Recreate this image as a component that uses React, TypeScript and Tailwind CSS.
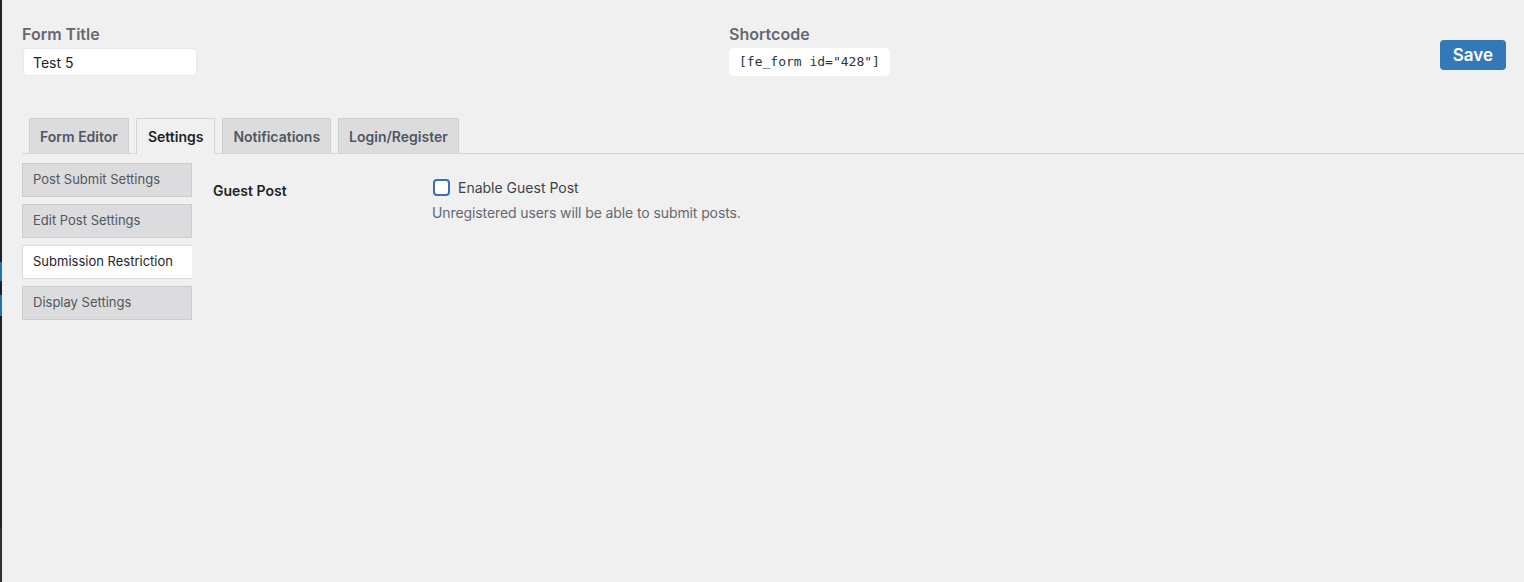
import React, { useState } from 'react';

const tabs = ['Form Editor', 'Settings', 'Notifications', 'Login/Register'];
const sections = ['Post Submit Settings', 'Edit Post Settings', 'Submission Restriction', 'Display Settings'];

export default function App() {
  const [tab, setTab] = useState('Settings');
  const [section, setSection] = useState('Submission Restriction');
  const [guest, setGuest] = useState(false);

  return (
    <div className="min-h-[582px] w-full bg-[#f0f0f1] flex font-['Inter','Liberation_Sans',sans-serif]">
      {/* admin menu edge */}
      <div className="w-[2px] shrink-0 flex flex-col bg-[#1d2327]">
        <div className="h-[262px]" />
        <div className="h-[19px] bg-[#2271b1]" />
        <div className="h-[14px]" />
        <div className="h-[21px] bg-[#2271b1]" />
        <div className="h-[212px]" />
        <div className="flex-1 bg-[#2c3338]" />
      </div>

      <div className="flex-1 pl-5 pt-[26px]">
        {/* header */}
        <div className="flex items-start pr-[18px]">
          <div className="w-[707px]">
            <div className="text-[16px] leading-[16px] font-semibold text-[#646970]">Form Title</div>
            <input
              defaultValue="Test 5"
              className="mt-[6px] ml-px w-[174px] h-[28px] rounded-[4px] bg-white border border-[#e4e8ee] px-[9px] text-[14px] text-[#1d2327] outline-none"
            />
          </div>
          <div className="flex-1">
            <div className="text-[16px] leading-[16px] font-semibold text-[#646970]">Shortcode</div>
            <div className="mt-[6px] inline-flex items-center h-[28px] px-[10px] rounded-[5px] bg-white font-['DejaVu_Sans_Mono','Liberation_Mono',monospace] text-[13px] text-[#2c3338]">
              [fe_form id="428"]
            </div>
          </div>
          <button className="mt-[14px] h-[30px] px-[13px] rounded-[4px] bg-[#3379b7] text-white text-[17px] font-semibold leading-none">
            Save
          </button>
        </div>

        {/* tabs */}
        <div className="mt-[42px] flex items-end gap-[7px] pl-[7px] border-b border-[#d6d6d8] h-[36px]">
          {tabs.map((t) => (
            <button
              key={t}
              onClick={() => setTab(t)}
              className={
                t === tab
                  ? 'h-[36px] -mb-px px-[11px] border border-b-0 border-[#d6d6d8] bg-[#f0f0f1] text-[14px] font-semibold text-[#1d2327]'
                  : 'h-[35px] px-[10px] border border-b-0 border-[#d0d0d2] bg-[#dcdcde] text-[14px] font-semibold text-[#50575e]'
              }
            >
              {t}
            </button>
          ))}
        </div>

        {/* body */}
        <div className="flex pt-[9px]">
          <div className="w-[170px] flex flex-col gap-[7px]">
            {sections.map((s) => (
              <button
                key={s}
                onClick={() => setSection(s)}
                className={
                  s === section
                    ? 'h-[34px] text-left pl-[10px] border border-r-0 border-[#dcdcde] bg-white text-[13px] text-[#1d2327]'
                    : 'h-[34px] text-left pl-[10px] border border-[#cdcdcf] bg-[#dcdcde] text-[13px] text-[#50575e]'
                }
              >
                {s}
              </button>
            ))}
          </div>

          <div className="flex pl-[21px] pt-[14px]">
            <div className="w-[219px] pt-[3px] text-[14px] font-semibold text-[#1d2327]">Guest Post</div>
            <div>
              <label className="flex items-center gap-[8px] cursor-pointer">
                <input
                  type="checkbox"
                  checked={guest}
                  onChange={() => setGuest(!guest)}
                  className="appearance-none ml-px w-[17px] h-[17px] rounded-[4px] border-2 border-[#3a6fb0] bg-white checked:bg-[#2271b1]"
                />
                <span className="text-[14px] text-[#3c434a]">Enable Guest Post</span>
              </label>
              <p className="mt-[4px] text-[14px] tracking-[-0.1px] text-[#646970]">Unregistered users will be able to submit posts.</p>
            </div>
          </div>
        </div>
      </div>
    </div>
  );
}
